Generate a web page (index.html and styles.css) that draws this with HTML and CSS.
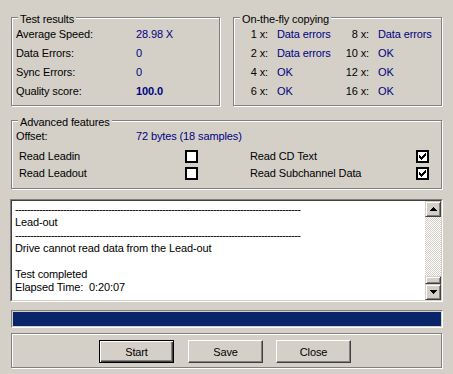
FILE: index.html
```html
<!DOCTYPE html>
<html>
<head>
<meta charset="utf-8">
<link rel="stylesheet" href="styles.css">
</head>
<body>
<div class="dialog">
  <div class="top">
    <div class="group results">
      <div class="legend">Test results</div>
      <div class="kv">
        <span>Average Speed:</span><span class="val">28.98 X</span>
        <span>Data Errors:</span><span class="val">0</span>
        <span>Sync Errors:</span><span class="val">0</span>
        <span>Quality score:</span><span class="val bold">100.0</span>
      </div>
    </div>
    <div class="group fly">
      <div class="legend">On-the-fly copying</div>
      <div class="flygrid">
        <span class="k">1 x:</span><span class="val v">Data errors</span><span class="k">8 x:</span><span class="val v">Data errors</span>
        <span class="k">2 x:</span><span class="val v">Data errors</span><span class="k">10 x:</span><span class="val v">OK</span>
        <span class="k">4 x:</span><span class="val v">OK</span><span class="k">12 x:</span><span class="val v">OK</span>
        <span class="k">6 x:</span><span class="val v">OK</span><span class="k">16 x:</span><span class="val v">OK</span>
      </div>
    </div>
  </div>

  <div class="group adv">
    <div class="legend">Advanced features</div>
    <div class="offset"><span>Offset:</span><span class="val">72 bytes (18 samples)</span></div>
    <div class="checks">
      <div class="check-row"><span>Read Leadin</span><span class="cb"></span></div>
      <div class="check-row"><span>Read CD Text</span><span class="cb"><svg width="9" height="9" viewBox="0 0 9 9" shape-rendering="crispEdges"><path d="M1 3h1v3H1zM2 4h1v3H2zM3 5h1v3H3zM4 4h1v3H4zM5 3h1v3H5zM6 2h1v3H6zM7 1h1v3H7z"/></svg></span></div>
      <div class="check-row"><span>Read Leadout</span><span class="cb"></span></div>
      <div class="check-row"><span>Read Subchannel Data</span><span class="cb"><svg width="9" height="9" viewBox="0 0 9 9" shape-rendering="crispEdges"><path d="M1 3h1v3H1zM2 4h1v3H2zM3 5h1v3H3zM4 4h1v3H4zM5 3h1v3H5zM6 2h1v3H6zM7 1h1v3H7z"/></svg></span></div>
    </div>
  </div>

  <div class="log">
    <div class="log-inner">
      <div class="log-text">
        <div class="dash">-----------------------------------------------------------------------------------------------</div>
        <div>Lead-out</div>
        <div class="dash">-----------------------------------------------------------------------------------------------</div>
        <div>Drive cannot read data from the Lead-out</div>
        <div>&nbsp;</div>
        <div>Test completed</div>
        <div>Elapsed Time:&nbsp; 0:20:07</div>
      </div>
      <div class="scrollbar">
        <div class="sbtn"><svg width="7" height="4" viewBox="0 0 7 4" shape-rendering="crispEdges"><path d="M3 0h1v1H3zM2 1h3v1H2zM1 2h5v1H1zM0 3h7v1H0z"/></svg></div>
        <div class="track"></div>
        <div class="thumb"></div>
        <div class="sbtn"><svg width="7" height="4" viewBox="0 0 7 4" shape-rendering="crispEdges"><path d="M0 0h7v1H0zM1 1h5v1H1zM2 2h3v1H2zM3 3h1v1H3z"/></svg></div>
      </div>
    </div>
  </div>

  <div class="progress"><div class="fill"></div></div>

  <div class="group buttons">
    <button class="btn default">Start</button>
    <button class="btn save">Save</button>
    <button class="btn">Close</button>
  </div>
</div>
</body>
</html>
```

FILE: styles.css
```css
* { box-sizing: border-box; }
html, body {
  margin: 0;
  padding: 0;
  background: #d4d0c8;
}
body {
  width: 453px;
  height: 374px;
  overflow: hidden;
  font-family: "Liberation Sans", Arial, sans-serif;
  font-size: 11px;
  letter-spacing: -0.12px;
  color: #000;
}
.dialog {
  display: flex;
  flex-direction: column;
  padding: 17px 0 0 11px;
}
.group {
  border: 1px solid #808080;
  box-shadow: 1px 1px 0 #fff, inset 1px 1px 0 #fff;
}
.legend {
  margin: -5px 0 0 6px;
  padding: 0 2px;
  height: 13px;
  line-height: 13px;
  width: max-content;
  background: #d4d0c8;
}
.val { color: #000080; }
.bold { font-weight: bold; }

.top {
  display: flex;
  gap: 13px;
}
.results, .fly {
  width: 209px;
  height: 89px;
}
.kv {
  display: grid;
  grid-template-columns: 120px 1fr;
  grid-auto-rows: 19px;
  line-height: 19px;
  margin-top: -1px;
  padding-left: 4px;
}
.flygrid {
  display: grid;
  grid-template-columns: 34px 67px 34px 1fr;
  grid-auto-rows: 19px;
  line-height: 19px;
  margin-top: -1px;
}
.flygrid .k { text-align: right; white-space: nowrap; }
.flygrid .v { padding-left: 9px; white-space: nowrap; }

.adv {
  margin-top: 14px;
  width: 431px;
  height: 69px;
}
.offset {
  display: grid;
  grid-template-columns: 120px 1fr;
  line-height: 13px;
  margin-top: 1px;
  padding-left: 4px;
}
.checks {
  display: grid;
  grid-template-columns: 179px 179px;
  column-gap: 52px;
  grid-auto-rows: 17px;
  margin-top: 5px;
  padding-left: 7px;
}
.check-row {
  display: flex;
  justify-content: space-between;
  align-items: center;
  line-height: 17px;
}
.cb {
  width: 13px;
  height: 13px;
  border: 2px solid #000;
  background: #fff;
  display: flex;
}
.cb svg { display: block; }

.log {
  margin-top: 10px;
  margin-left: -1px;
  width: 433px;
  height: 103px;
  border: 1px solid;
  border-color: #808080 #fff #fff #808080;
}
.log-inner {
  height: 100%;
  border: 1px solid;
  border-color: #404040 #d4d0c8 #d4d0c8 #404040;
  background: #fff;
  display: flex;
}
.log-text {
  flex: 1;
  padding: 2px 0 0 3px;
  line-height: 13px;
  white-space: nowrap;
  overflow: hidden;
}
.dash {
  letter-spacing: -0.66px;
}
.scrollbar {
  width: 16px;
  display: flex;
  flex-direction: column;
}
.sbtn {
  width: 16px;
  height: 16px;
  flex: none;
  border: 1px solid;
  border-color: #d4d0c8 #404040 #404040 #d4d0c8;
  box-shadow: inset 1px 1px 0 #fff, inset -1px -1px 0 #808080;
  background: #d4d0c8;
  display: flex;
  align-items: center;
  justify-content: center;
}
.sbtn svg { display: block; }
.track {
  flex: 1;
  background: repeating-conic-gradient(#fff 0 25%, #d4d0c8 0 50%) 0 0 / 2px 2px;
}
.thumb {
  height: 8px;
  flex: none;
  border: 1px solid;
  border-color: #d4d0c8 #404040 #404040 #d4d0c8;
  box-shadow: inset 1px 1px 0 #fff, inset -1px -1px 0 #808080;
  background: #d4d0c8;
}

.progress {
  margin-top: 8px;
  width: 432px;
  height: 18px;
  border: 1px solid;
  border-color: #808080 #fff #fff #808080;
  padding: 1px;
}
.fill {
  height: 100%;
  background: #0a246a;
}

.buttons {
  margin-top: 5px;
  width: 431px;
  height: 35px;
  display: flex;
  gap: 13px;
  padding: 6px 0 0 87px;
}
.btn {
  width: 75px;
  height: 23px;
  margin: 0;
  padding: 0;
  font-family: "Liberation Sans", Arial, sans-serif;
  font-size: 11px;
  letter-spacing: -0.12px;
  color: #000;
  background: #d4d0c8;
  border: 1px solid;
  border-color: #fff #404040 #404040 #fff;
  box-shadow: inset -1px -1px 0 #808080;
  border-radius: 0;
}
.btn.default {
  border-color: #000;
  box-shadow: inset 1px 1px 0 #fff, inset -1px -1px 0 #404040, inset -2px -2px 0 #808080;
}
.btn.save { margin-left: 1px; }
```
